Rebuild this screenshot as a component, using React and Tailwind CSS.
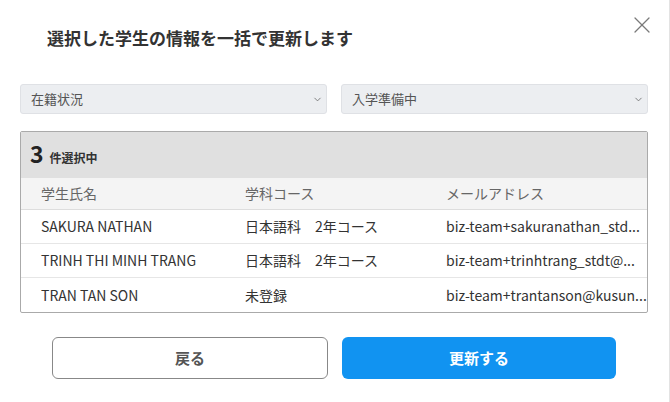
import { ChevronDown, X } from "lucide-react";

const rows = [
  { name: "SAKURA NATHAN", course: "日本語科　2年コース", mail: "biz-team+sakuranathan_std..." },
  { name: "TRINH THI MINH TRANG", course: "日本語科　2年コース", mail: "biz-team+trinhtrang_stdt@..." },
  { name: "TRAN TAN SON", course: "未登録", mail: "biz-team+trantanson@kusun..." },
];

const Select = ({ label }) => (
  <div className="flex h-[30px] flex-1 items-center justify-between rounded-[3px] border border-[#dfe1e5] bg-[#eceef1] pl-[10px] pr-[3px] text-[13px] text-[#555]">
    <span>{label}</span>
    <ChevronDown className="size-[11px] text-[#666]" strokeWidth={1.75} />
  </div>
);

export default function App() {
  return (
    <div
      className="relative h-[402px] w-[670px] border-r border-[#e3e3e3] bg-white text-[#333]"
      style={{ fontFamily: '"Noto Sans CJK JP", "Noto Sans", sans-serif' }}
    >
      <button className="absolute right-[13px] top-[11px] text-[#7a7a7a]">
        <X className="size-[28px]" strokeWidth={1.1} />
      </button>

      <div className="px-[20px] pr-[21px]">
        <h1 className="pl-[27px] pt-[26px] text-[17px] font-bold leading-[24px] text-[#333]">
          選択した学生の情報を一括で更新します
        </h1>

        <div className="mt-[34px] flex gap-[14px]">
          <Select label="在籍状況" />
          <Select label="入学準備中" />
        </div>

        <div className="mt-[17px] overflow-hidden rounded-[2px] border border-[#aaa]">
          <div className="flex h-[46px] items-baseline gap-[6px] bg-[#e0e0e0] pl-[9px] pt-[7px]">
            <span className="text-[23px] font-bold leading-[28px] text-[#222]">3</span>
            <span className="text-[12px] font-bold text-[#333]">件選択中</span>
          </div>
          <div className="grid h-[32px] grid-cols-[204px_201px_1fr] items-center border-b border-[#ddd] bg-[#f4f4f4] pl-[20px] text-[14px] text-[#666]">
            <span className="-mt-[1px]">学生氏名</span>
            <span className="-mt-[1px]">学科コース</span>
            <span className="-mt-[1px]">メールアドレス</span>
          </div>
          {rows.map((r, i) => (
            <div
              key={r.name}
              className={`grid h-[34px] grid-cols-[204px_201px_1fr] items-center pl-[20px] text-[14px] text-[#333] ${
                i < rows.length - 1 ? "border-b border-[#e6e6e6]" : ""
              }`}
            >
              <span className="whitespace-nowrap">{r.name}</span>
              <span className="whitespace-pre">{r.course}</span>
              <span className="whitespace-nowrap">{r.mail}</span>
            </div>
          ))}
        </div>

        <div className="mt-[24px] flex gap-[14px] px-[32px]">
          <button className="h-[42px] flex-1 rounded-[6px] border border-[#888] bg-white text-[15px] font-bold text-[#555]">
            戻る
          </button>
          <button className="h-[42px] flex-1 rounded-[6px] bg-[#1193f1] text-[15px] font-bold text-white">
            更新する
          </button>
        </div>
      </div>
    </div>
  );
}
